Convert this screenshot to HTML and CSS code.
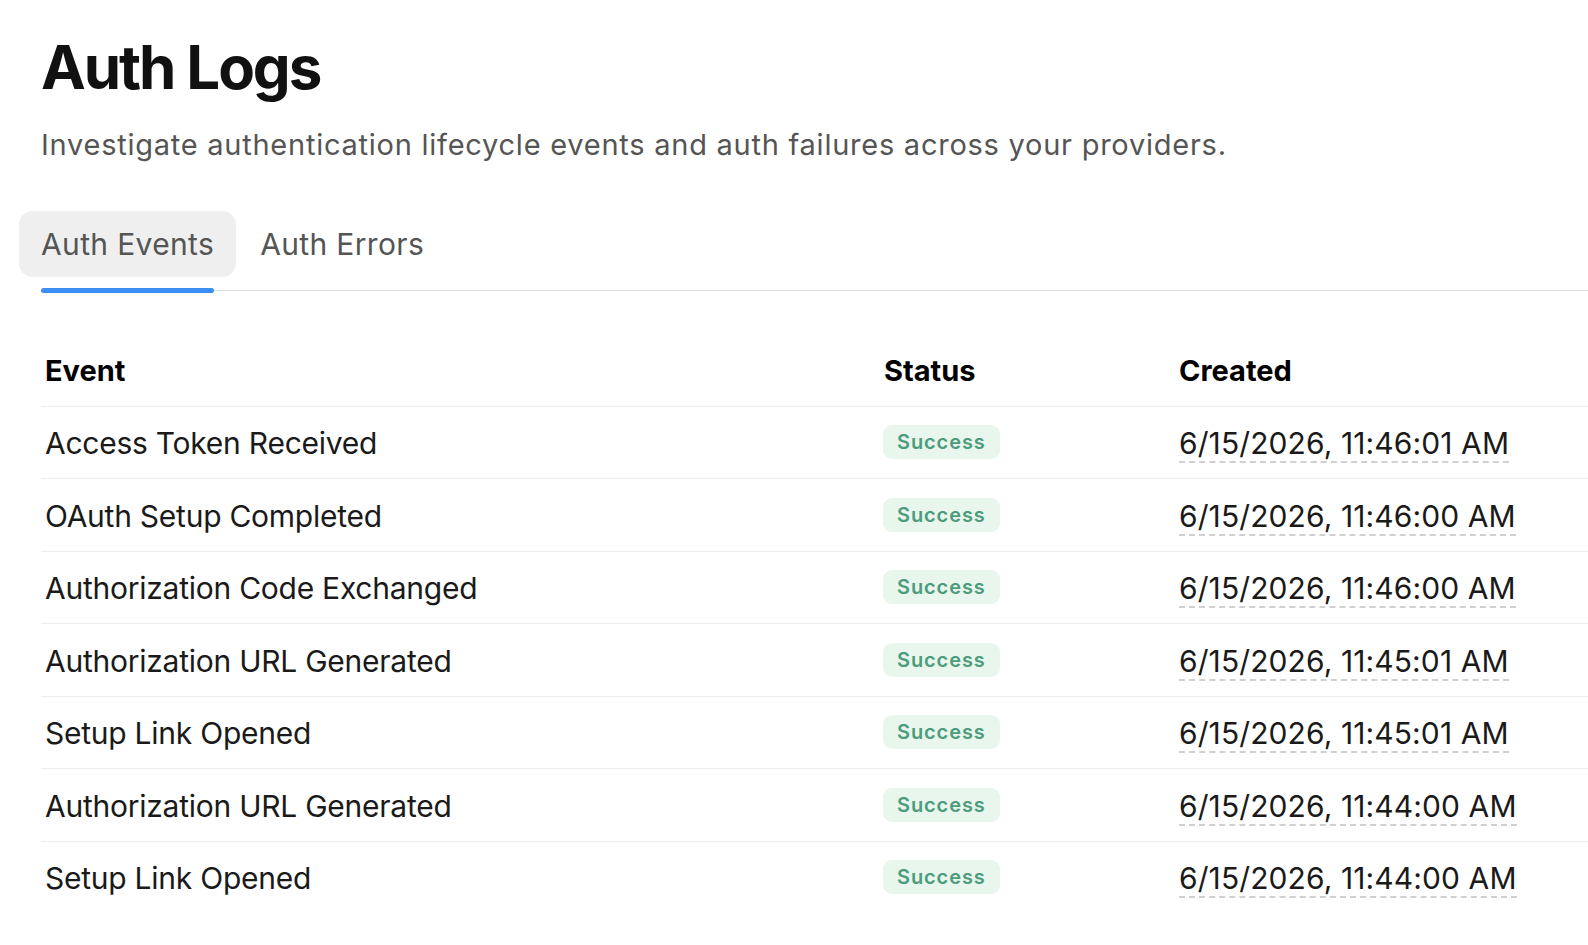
FILE: index.html
```html
<!DOCTYPE html>
<html lang="en">
<head>
  <meta charset="UTF-8" />
  <title>Auth Logs</title>
  <link rel="stylesheet" href="styles.css">
</head>
<body>
  <main class="page">
    <h1>Auth Logs</h1>
    <p class="subtitle">Investigate authentication lifecycle events and auth failures across your providers.</p>

    <div class="tabs">
      <button class="tab active">Auth Events</button>
      <button class="tab">Auth Errors</button>
    </div>

    <table class="log-table">
      <thead>
        <tr>
          <th class="col-event">Event</th>
          <th class="col-status">Status</th>
          <th>Created</th>
        </tr>
      </thead>
      <tbody>
        <tr>
          <td>Access Token Received</td>
          <td><span class="badge">Success</span></td>
          <td><span class="time">6/15/2026, 11:46:01 AM</span></td>
        </tr>
        <tr>
          <td>OAuth Setup Completed</td>
          <td><span class="badge">Success</span></td>
          <td><span class="time">6/15/2026, 11:46:00 AM</span></td>
        </tr>
        <tr>
          <td>Authorization Code Exchanged</td>
          <td><span class="badge">Success</span></td>
          <td><span class="time">6/15/2026, 11:46:00 AM</span></td>
        </tr>
        <tr>
          <td>Authorization URL Generated</td>
          <td><span class="badge">Success</span></td>
          <td><span class="time">6/15/2026, 11:45:01 AM</span></td>
        </tr>
        <tr>
          <td>Setup Link Opened</td>
          <td><span class="badge">Success</span></td>
          <td><span class="time">6/15/2026, 11:45:01 AM</span></td>
        </tr>
        <tr>
          <td>Authorization URL Generated</td>
          <td><span class="badge">Success</span></td>
          <td><span class="time">6/15/2026, 11:44:00 AM</span></td>
        </tr>
        <tr>
          <td>Setup Link Opened</td>
          <td><span class="badge">Success</span></td>
          <td><span class="time">6/15/2026, 11:44:00 AM</span></td>
        </tr>
      </tbody>
    </table>
  </main>
</body>
</html>
```

FILE: styles.css
```css
body {
  margin: 0;
  font-family: Inter, "Noto Sans", sans-serif;
  background: #fff;
  color: #1a1a1a;
  overflow: hidden;
}

.page {
  padding: 31px 0 0 41px;
}

h1 {
  margin: 0;
  font-size: 60px;
  line-height: 72px;
  font-weight: 700;
  letter-spacing: -2.1px;
  color: #111;
}

.subtitle {
  margin: 22px 0 0;
  font-size: 29px;
  line-height: 39px;
  letter-spacing: 0.75px;
  color: #555;
}

.tabs {
  display: flex;
  gap: 2px;
  margin-top: 47px;
  padding-bottom: 13px;
  border-bottom: 1px solid #dcdcdc;
}

.tab {
  position: relative;
  font-family: inherit;
  font-size: 30px;
  line-height: 36px;
  letter-spacing: 0.35px;
  color: #555;
  background: none;
  border: none;
  border-radius: 14px;
  padding: 15px 22px;
  cursor: pointer;
}

.tab:first-child {
  margin-left: -22px;
}

.tab.active {
  background: #efefef;
}

/* blue indicator under the active tab */
.tab.active::after {
  content: "";
  position: absolute;
  left: 22px;
  right: 22px;
  top: calc(100% + 11px);
  height: 5px;
  border-radius: 3px;
  background: #3d8ef3;
}

.log-table {
  margin-top: 43px;
  width: 100%;
  border-collapse: collapse;
  font-size: 30px;
}

.log-table th,
.log-table td {
  text-align: left;
  padding: 18.5px 4px 17px;
  line-height: 36px;
  vertical-align: top;
  white-space: nowrap;
}

.log-table td {
  letter-spacing: -0.25px;
}

.log-table th {
  font-weight: 700;
  font-size: 29px;
  color: #000;
}

.log-table tr {
  border-bottom: 1px solid #ececec;
}

.log-table tbody tr:last-child {
  border-bottom: none;
}

.col-event {
  width: 831px;
}

.col-status {
  width: 287px;
}

.badge {
  display: inline-block;
  margin-left: -1px;
  padding: 0 14px;
  line-height: 34px;
  font-size: 20px;
  font-weight: 600;
  letter-spacing: 0.9px;
  color: #4d9c7a;
  background: #e8f6ee;
  border-radius: 9px;
  vertical-align: top;
}

.time {
  letter-spacing: 0.1px;
  border-bottom: 2px dashed #d0d0d0;
}
```
